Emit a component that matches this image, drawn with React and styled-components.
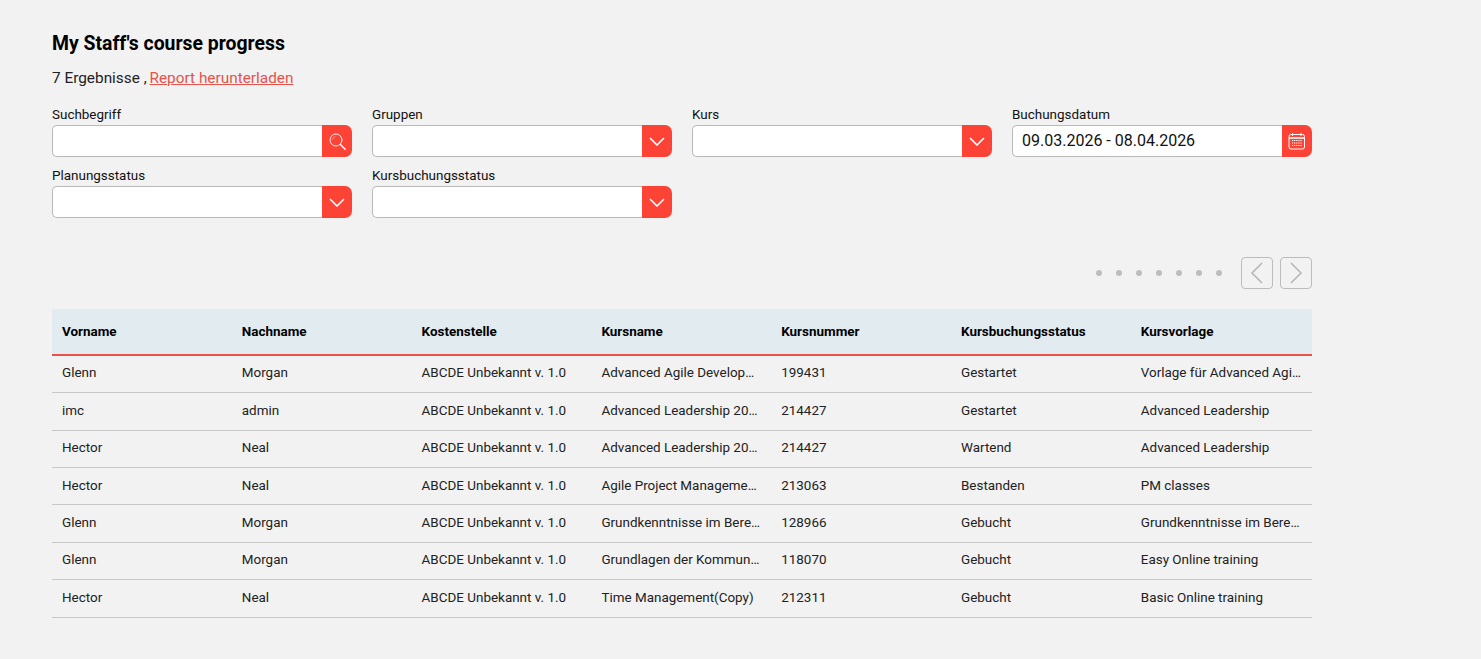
import React from "react";
import styled, { createGlobalStyle } from "styled-components";

const GlobalStyle = createGlobalStyle`
  html, body {
    margin: 0;
    padding: 0;
    background: #f2f2f2;
  }
  body {
    font-family: Roboto, "Liberation Sans", sans-serif;
    color: #000;
  }
`;

const Page = styled.div`
  width: 1260px;
  height: 627px;
  padding: 32px 0 0 52px;
  overflow: hidden;
`;

const Title = styled.h1`
  margin: 0;
  font-size: 19.4px;
  line-height: 23px;
  font-weight: 700;
`;

const ResultLine = styled.div`
  margin-top: 13px;
  font-size: 15.36px;
  line-height: 20px;
  color: #222;
`;

const ReportLink = styled.a`
  margin-left: -1px;
  color: #e8524a;
  text-decoration: underline;
`;

const FilterGrid = styled.div`
  display: grid;
  grid-template-columns: repeat(4, 300px);
  column-gap: 20px;
  row-gap: 9px;
  margin-top: 17px;
`;

const Field = styled.div`
  display: flex;
  flex-direction: column;
`;

const FieldLabel = styled.label`
  box-sizing: border-box;
  font-size: 13.44px;
  line-height: 16px;
  height: 20px;
  padding-top: 2px;
  color: #111;
`;

const InputWrap = styled.div`
  display: flex;
  height: 32px;
`;

const TextBox = styled.div`
  flex: 1;
  box-sizing: border-box;
  background: #fff;
  border: 1px solid #b9b9b9;
  border-right: 0;
  border-radius: 5px 0 0 5px;
  padding-left: 9px;
  font-size: 16px;
  line-height: 29px;
  color: #111;
`;

const AddonButton = styled.div`
  width: 30px;
  background: #fd4335;
  border-radius: 0 7px 7px 0;
  display: flex;
  align-items: center;
  justify-content: center;
`;

const Pager = styled.div`
  display: flex;
  justify-content: flex-end;
  align-items: center;
  margin-top: 39px;
  height: 32px;
`;

const Dots = styled.div`
  display: flex;
  gap: 14px;
  margin-right: 19px;
`;

const Dot = styled.span`
  width: 6px;
  height: 6px;
  border-radius: 50%;
  background: #bdbdbd;
`;

const PageButton = styled.div`
  box-sizing: border-box;
  width: 32px;
  height: 32px;
  margin-left: ${(p) => (p.$next ? "7px" : "0")};
  border: 1px solid #bcbcbc;
  border-radius: 4px;
  display: flex;
  align-items: center;
  justify-content: center;
`;

const Table = styled.div`
  margin-top: 20px;
  width: 1260px;
`;

const HeadRow = styled.div`
  display: grid;
  grid-template-columns: repeat(7, 179.8px);
  height: 46.8px;
  box-sizing: border-box;
  align-items: center;
  background: #e2ebf0;
  border-bottom: 2px solid #e8524a;
`;

const HeadCell = styled.div`
  padding: 0 10px;
  font-size: 13.44px;
  font-weight: 700;
  color: #000;
  white-space: nowrap;
`;

const Row = styled.div`
  display: grid;
  grid-template-columns: repeat(7, 179.8px);
  height: 37.4px;
  box-sizing: border-box;
  padding-bottom: 2px;
  align-items: center;
  border-bottom: 1px solid #c8c8c8;
`;

const Cell = styled.div`
  padding: 0 10px;
  font-size: 13.44px;
  color: #222;
  white-space: nowrap;
`;

const SearchIcon = () => (
  <svg width="17" height="17" viewBox="0 0 17 17" fill="none" stroke="#fff" strokeWidth="0.9" strokeLinecap="round">
    <circle cx="7" cy="7" r="6" />
    <path d="M3.4 6.4a3.6 3.6 0 0 1 2.6-2.8" strokeWidth="0.6" opacity="0.7" />
    <path d="M11.4 11.4l4.8 4.8" strokeWidth="1.4" />
  </svg>
);

const ChevronDown = () => (
  <svg width="16" height="9" viewBox="0 0 16 9" fill="none" stroke="#fff" strokeWidth="1.6">
    <path d="M1 1l7 7 7-7" />
  </svg>
);

const CalendarIcon = () => (
  <svg width="18" height="18" viewBox="0 0 18 18" fill="none" stroke="#fff">
    <rect x="1" y="2.5" width="15.5" height="14.5" rx="2" strokeWidth="1" />
    <path d="M1 6h15.5" strokeWidth="1.6" />
    <path d="M4.5 1v3M13 1v3" strokeWidth="1" />
    <path d="M4 8.5h10M4 11h10M4 13.5h10" strokeWidth="1.2" strokeDasharray="1.2 0.9" />
  </svg>
);

const ArrowIcon = ({ next }) => (
  <svg width="14" height="22" viewBox="0 0 14 22" fill="none" stroke="#b4b4b4" strokeWidth="1.5">
    <path d={next ? "M2 1l10 10L2 21" : "M12 1L2 11l10 10"} />
  </svg>
);

const filters = [
  { label: "Suchbegriff", icon: <SearchIcon /> },
  { label: "Gruppen", icon: <ChevronDown /> },
  { label: "Kurs", icon: <ChevronDown /> },
  { label: "Buchungsdatum", icon: <CalendarIcon />, value: "09.03.2026 - 08.04.2026" },
  { label: "Planungsstatus", icon: <ChevronDown /> },
  { label: "Kursbuchungsstatus", icon: <ChevronDown /> },
];

const columns = ["Vorname", "Nachname", "Kostenstelle", "Kursname", "Kursnummer", "Kursbuchungsstatus", "Kursvorlage"];

const center = "ABCDE Unbekannt v. 1.0";

const rows = [
  ["Glenn", "Morgan", center, "Advanced Agile Develop…", "199431", "Gestartet", "Vorlage für Advanced Agi…"],
  ["imc", "admin", center, "Advanced Leadership 20…", "214427", "Gestartet", "Advanced Leadership"],
  ["Hector", "Neal", center, "Advanced Leadership 20…", "214427", "Wartend", "Advanced Leadership"],
  ["Hector", "Neal", center, "Agile Project Manageme…", "213063", "Bestanden", "PM classes"],
  ["Glenn", "Morgan", center, "Grundkenntnisse im Bere…", "128966", "Gebucht", "Grundkenntnisse im Bere…"],
  ["Glenn", "Morgan", center, "Grundlagen der Kommun…", "118070", "Gebucht", "Easy Online training"],
  ["Hector", "Neal", center, "Time Management(Copy)", "212311", "Gebucht", "Basic Online training"],
];

export default function App() {
  return (
    <Page>
      <GlobalStyle />
      <Title>My Staff's course progress</Title>
      <ResultLine>
        7 Ergebnisse , <ReportLink>Report herunterladen</ReportLink>
      </ResultLine>
      <FilterGrid>
        {filters.map((f) => (
          <Field key={f.label}>
            <FieldLabel>{f.label}</FieldLabel>
            <InputWrap>
              <TextBox>{f.value}</TextBox>
              <AddonButton>{f.icon}</AddonButton>
            </InputWrap>
          </Field>
        ))}
      </FilterGrid>
      <Pager>
        <Dots>
          {[0, 1, 2, 3, 4, 5, 6].map((i) => (
            <Dot key={i} />
          ))}
        </Dots>
        <PageButton>
          <ArrowIcon />
        </PageButton>
        <PageButton $next>
          <ArrowIcon next />
        </PageButton>
      </Pager>
      <Table>
        <HeadRow>
          {columns.map((c) => (
            <HeadCell key={c}>{c}</HeadCell>
          ))}
        </HeadRow>
        {rows.map((r, i) => (
          <Row key={i}>
            {r.map((v, j) => (
              <Cell key={j}>{v}</Cell>
            ))}
          </Row>
        ))}
      </Table>
    </Page>
  );
}
